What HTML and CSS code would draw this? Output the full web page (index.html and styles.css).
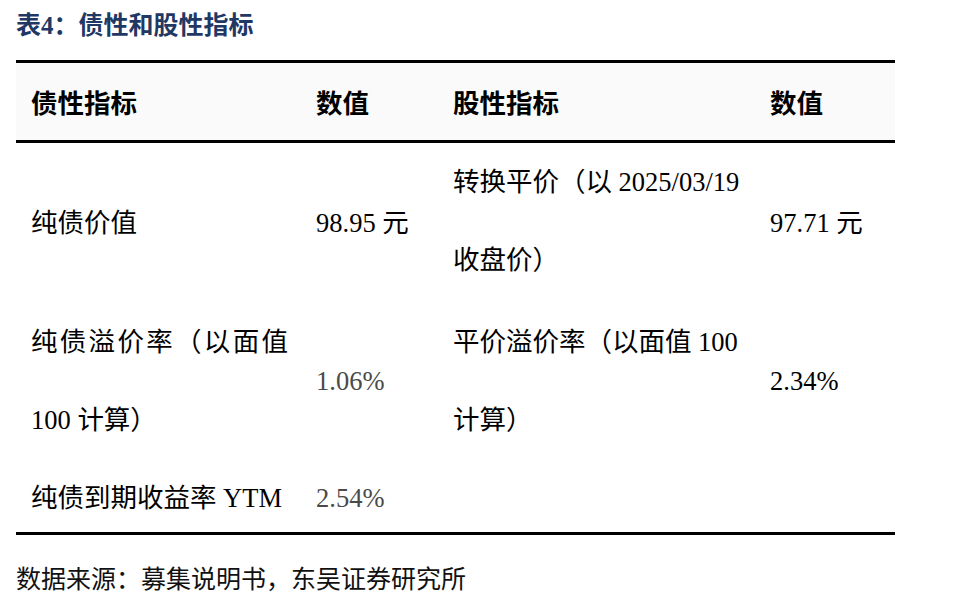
FILE: index.html
```html
<!DOCTYPE html>
<html lang="zh-CN">
<head>
<meta charset="utf-8">
<title>表4：债性和股性指标</title>
<link rel="stylesheet" href="styles.css">
</head>
<body>
<div class="page">
  <h1 class="title">表<span class="num">4</span>：债性和股性指标</h1>
  <div class="table">
    <div class="row head">
      <div class="cell">债性指标</div>
      <div class="cell">数值</div>
      <div class="cell">股性指标</div>
      <div class="cell">数值</div>
    </div>
    <div class="row r1">
      <div class="cell">纯债价值</div>
      <div class="cell">98.95 元</div>
      <div class="cell multi">转换平价（以 2025/03/19<br>收盘价）</div>
      <div class="cell">97.71 元</div>
    </div>
    <div class="row r2">
      <div class="cell wrap"><p class="just">纯债溢价率（以面值 100 计算）</p></div>
      <div class="cell muted">1.06%</div>
      <div class="cell multi">平价溢价率（以面值 100<br>计算）</div>
      <div class="cell">2.34%</div>
    </div>
    <div class="row r3">
      <div class="cell">纯债到期收益率 YTM</div>
      <div class="cell muted">2.54%</div>
      <div class="cell"></div>
      <div class="cell"></div>
    </div>
  </div>
  <p class="source">数据来源：募集说明书，东吴证券研究所</p>
</div>
</body>
</html>
```

FILE: styles.css
```css
html, body {
  margin: 0;
  padding: 0;
  background: #ffffff;
}

body {
  font-family: "Liberation Serif", "Noto Sans CJK SC", serif;
  color: #000000;
}

.page {
  width: 972px;
}

.title {
  margin: 0;
  padding-left: 16px;
  height: 46px;
  line-height: 46px;
  font-size: 25px;
  font-weight: bold;
  color: #1f3864;
  font-family: "Noto Sans CJK SC", sans-serif;
}

.title .num {
  font-family: "Liberation Serif", serif;
}

.table {
  margin: 14px 0 0 16px;
  width: 879px;
  border-top: 3px solid #000000;
  border-bottom: 3px solid #000000;
}

.row {
  display: grid;
  grid-template-columns: 285px 137px 317px 140px;
}

.cell {
  padding-left: 15px;
  display: flex;
  align-items: center;
  font-size: 26.5px;
  line-height: 78px;
  white-space: nowrap;
}

.cell.wrap {
  white-space: normal;
  padding-right: 13px;
}

.just {
  margin: 0;
  width: 100%;
  text-align: justify;
}

.head {
  height: 77px;
  background: #fafafa;
  border-bottom: 3px solid #000000;
}

.head .cell {
  font-family: "Noto Sans CJK SC", sans-serif;
  font-weight: bold;
  line-height: 40px;
}

.r1 {
  height: 160px;
}

.r1 .multi {
  align-items: flex-start;
}

.r2 {
  height: 156px;
}

.r3 {
  height: 73px;
}

.muted {
  color: #4a4a4a;
}

.source {
  margin: 22px 0 0 16px;
  font-size: 25px;
  line-height: 40px;
  font-family: "Noto Sans CJK SC", sans-serif;
  color: #111111;
}
```
